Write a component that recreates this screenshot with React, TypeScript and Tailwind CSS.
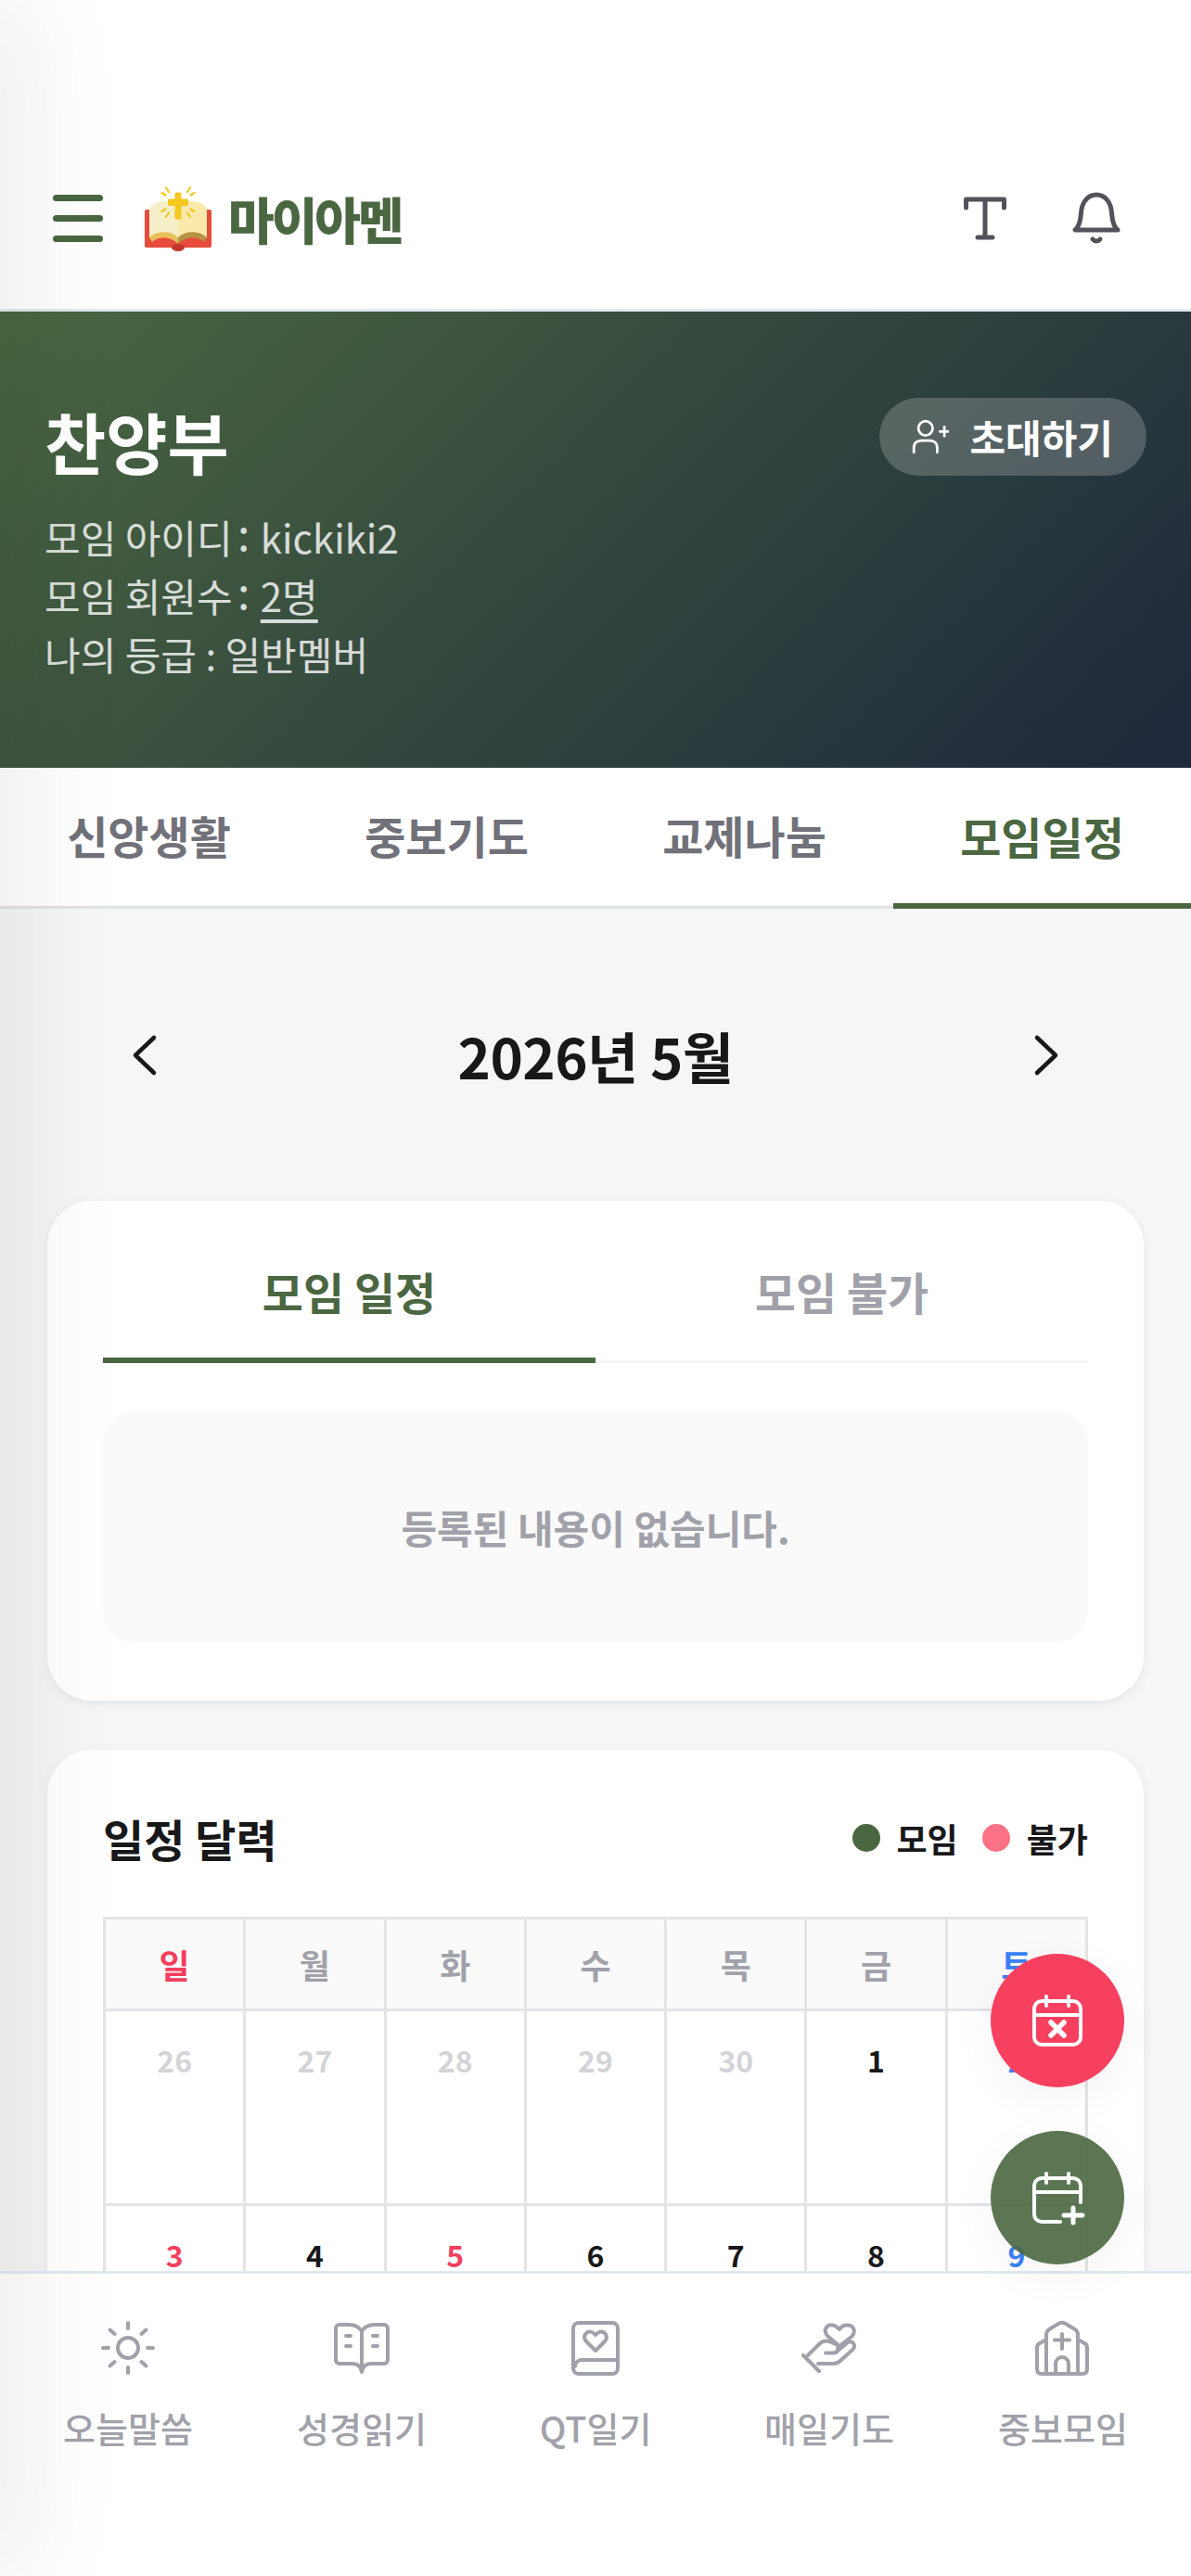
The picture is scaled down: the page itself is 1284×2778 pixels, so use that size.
import type { ReactNode } from "react";

const FONT = { fontFamily: '"Noto Sans CJK KR", "Noto Sans", sans-serif' };

function Icon({ children, className = "" }: { children: ReactNode; className?: string }) {
  return (
    <svg
      viewBox="0 0 60 60"
      fill="none"
      stroke="currentColor"
      strokeWidth={4}
      strokeLinecap="round"
      strokeLinejoin="round"
      className={className}
      aria-hidden="true"
    >
      {children}
    </svg>
  );
}

function Logo() {
  return (
    <svg viewBox="0 0 72 70" className="h-[70px] w-[72px]" aria-hidden="true">
      <rect x="0" y="25" width="72" height="41" rx="2" fill="#e74c3c" />
      <ellipse cx="36" cy="66" rx="7" ry="4" fill="#c0392b" />
      <path d="M36 18C28 15 17 15 12 18 8 20 5 22 5 26V56C16 47 28 49 36 56Z" fill="#f5efc9" />
      <path d="M36 18C44 15 55 15 60 18 64 20 67 22 67 26V56C56 47 44 49 36 56Z" fill="#f9e9ab" />
      <path d="M5 55C15 47 28 48 36 55V62C28 54 16 53 8 60Z" fill="#e8bf5a" />
      <path d="M67 55C57 47 44 48 36 55V62C44 54 56 53 64 60Z" fill="#b59343" />
      <rect x="32.5" y="6.5" width="7" height="29" rx="1.5" fill="#f4c81e" />
      <rect x="25" y="13.5" width="22" height="7.5" rx="1.5" fill="#f4c81e" />
      <g stroke="#f4c81e" strokeWidth="2.2" strokeLinecap="round">
        <path d="M23 1.5l3 4.5M49 1.5l-3 4.5M18.500 7l4 2.500M53.500 7l-4 2.500" />
        <path d="M18.500 27l4-2.500M53.500 27l-4-2.500M23 33l3-4.500M49 33l-3-4.500" />
      </g>
    </svg>
  );
}

const days = [
  { label: "일", color: "text-[#f43f5e]" },
  { label: "월", color: "text-[#a1a1aa]" },
  { label: "화", color: "text-[#a1a1aa]" },
  { label: "수", color: "text-[#a1a1aa]" },
  { label: "목", color: "text-[#a1a1aa]" },
  { label: "금", color: "text-[#a1a1aa]" },
  { label: "토", color: "text-[#3b82f6]" },
];

const weeks = [
  [
    { n: 26, c: "text-[#d4d4d8]" },
    { n: 27, c: "text-[#d4d4d8]" },
    { n: 28, c: "text-[#d4d4d8]" },
    { n: 29, c: "text-[#d4d4d8]" },
    { n: 30, c: "text-[#d4d4d8]" },
    { n: 1, c: "text-[#18181b]" },
    { n: 2, c: "text-[#3b82f6]" },
  ],
  [
    { n: 3, c: "text-[#f43f5e]" },
    { n: 4, c: "text-[#18181b]" },
    { n: 5, c: "text-[#f43f5e]" },
    { n: 6, c: "text-[#18181b]" },
    { n: 7, c: "text-[#18181b]" },
    { n: 8, c: "text-[#18181b]" },
    { n: 9, c: "text-[#3b82f6]" },
  ],
];

const navItems: { label: string; icon: ReactNode }[] = [
  {
    label: "오늘말씀",
    icon: (
      <>
        <circle cx="30" cy="30" r="11" />
        <path d="M30 3v6M30 51v6M3 30h6M51 30h6M10.500 10.500l5 4.500M49.500 10.500l-5 4.500M10.500 49.500l5-4.500M49.500 49.500l-5-4.500" />
      </>
    ),
  },
  {
    label: "성경읽기",
    icon: (
      <>
        <path d="M30 12C27 7 22 5 16 5H6A4 4 0 0 0 2 9V43A4 4 0 0 0 6 47H20C25 47 29 50 30 56 31 50 35 47 40 47H54A4 4 0 0 0 58 43V9A4 4 0 0 0 54 5H44C38 5 33 7 30 12V50" />
        <path d="M13 17h5M13 28h5M42 17h5M42 28h5" />
      </>
    ),
  },
  {
    label: "QT일기",
    icon: (
      <>
        <rect x="6" y="3" width="48" height="55" rx="6" />
        <path d="M8 50A7 7 0 0 1 15 43H53" />
        <path d="M30 33L20 23C15 17 21 11 26 13 28 14 29 15 30 16 31 15 32 14 34 13 39 11 45 17 40 23Z" />
      </>
    ),
  },
  {
    label: "매일기도",
    icon: (
      <>
        <path d="M41 28L28 17C23 11 27 4 34 5.500 37 6 39 8 41 10 43 7 46 5 50 5.500 57 6 59 13 54 18Z" />
        <path d="M7 38L19 26C22 23 26 22 30 23L37 26C41 28 40 35 35 35.500H26" />
        <path d="M37 35L50 24C55 21 60 28 55 32L43 43C40 46 38 47 35 47H18" />
        <path d="M2 38L19 55" />
      </>
    ),
  },
  {
    label: "중보모임",
    icon: (
      <>
        <path d="M12 21L5 25Q2 26 2 30V53Q2 58 7 58H51Q56 58 56 53V30Q56 26 53 25L46 21" />
        <path d="M12 58V16Q12 12 15 10L26 3.500Q29 2 32 3.500L43 10Q46 12 46 16V58" />
        <path d="M29 15V31M21 21.500H37" />
        <path d="M22 58V47A7 7 0 0 1 36 47V58" />
      </>
    ),
  },
];

export default function App() {
  return (
    <div style={FONT} className="relative flex h-[2778px] w-[1284px] flex-col overflow-hidden bg-white">
      <header className="flex h-[336px] shrink-0 items-center border-b-[3px] border-[#e2e8f0] pl-[57px] pr-[72px] pt-[138px]">
        <div className="flex w-[54px] flex-col gap-[15px]">
          <span className="h-[7px] rounded-full bg-[#4a6741]" />
          <span className="h-[7px] rounded-full bg-[#4a6741]" />
          <span className="h-[7px] rounded-full bg-[#4a6741]" />
        </div>
        <div className="ml-[45px] flex items-center">
          <Logo />
        </div>
        <span className="ml-[18px] text-[54px] leading-[70px] font-black tracking-[-3px] text-[#4a6741]">마이아멘</span>
        <div className="ml-auto flex items-center gap-[60px] text-[#52525b]">
          <Icon className="h-[60px] w-[60px]">
            <path d="M9.500 18V9H50.500V18M30 9V50M22 50H38" strokeWidth="5" />
          </Icon>
          <Icon className="h-[60px] w-[60px]">
            <path d="M7 42H53C48 38 47 31 46.500 24 46 12 39 4 30 4 21 4 14 12 13.500 24 13 31 12 38 7 42Z" strokeWidth="5" />
            <path d="M26 52C28 54.500 32 54.500 34 52" strokeWidth="5" />
          </Icon>
        </div>
      </header>

      <section className="flex h-[492px] shrink-0 items-start justify-between bg-[linear-gradient(135deg,#4a6741,#1e293b_97%)] px-[48px] pt-[93px]">
        <div>
          <h1 className="text-[72px] leading-[92px] font-bold text-white">찬양부</h1>
          <div className="mt-[26px] text-[42px] leading-[63px] font-normal text-white/80">
            <p>
              모임 아이디 <span className="relative -top-[3px] -ml-[4px] mr-[2px] text-[48px] leading-none">:</span> kickiki2
            </p>
            <p>
              모임 회원수 <span className="relative -top-[3px] -ml-[4px] mr-[2px] text-[48px] leading-none">:</span>{" "}
              <span className="underline underline-offset-[8px]">2명</span>
            </p>
            <p>나의 등급 : 일반멤버</p>
          </div>
        </div>
        <button className="flex h-[84px] items-center gap-[22px] rounded-full bg-white/20 pl-[33px] pr-[36px] text-[42px] leading-none font-bold text-white">
          <Icon className="h-[42px] w-[42px]">
            <circle cx="24" cy="17" r="11" />
            <path d="M6 54V47C6 39 12 36 18 36H30C36 36 42 39 42 47V54M46 22H60M53 15V29" />
          </Icon>
          초대하기
        </button>
      </section>

      <nav className="grid h-[152px] shrink-0 grid-cols-4 border-b-[3px] border-[#e4e4e7] pb-[6px] text-[48px] font-bold text-[#71717a]">
        <div className="flex items-center justify-center">신앙생활</div>
        <div className="flex items-center justify-center">중보기도</div>
        <div className="flex items-center justify-center">교제나눔</div>
        <div className="-mb-[9px] flex items-center justify-center border-b-[6px] border-[#4a6741] text-[#4a6741]">모임일정</div>
      </nav>

      <main className="min-h-0 flex-1 overflow-hidden bg-[#f5f6f8] px-[51px]">
        <div className="flex h-[315px] items-center justify-between px-[78px] text-[#18181b]">
          <Icon className="h-[60px] w-[60px]">
            <path d="M37 11L17 30L37 49" strokeWidth="4.500" />
          </Icon>
          <h2 className="text-[60px] leading-none font-bold tracking-[-0.5px]">2026년 5월</h2>
          <Icon className="h-[60px] w-[60px]">
            <path d="M23 11L43 30L23 49" strokeWidth="4.500" />
          </Icon>
        </div>

        <section className="h-[539px] rounded-[48px] bg-white px-[60px] shadow-[0_3px_12px_rgba(0,0,0,0.07)]">
          <div className="flex h-[175px] border-b-[3px] border-[#f4f4f5] pt-[62px] text-[48px] font-bold text-[#a1a1aa]">
            <div className="-mb-[3px] flex h-[113px] flex-1 justify-center border-b-[6px] border-[#4a6741] leading-[70px] text-[#4a6741]">모임 일정</div>
            <div className="flex flex-1 justify-center leading-[70px]">모임 불가</div>
          </div>
          <div className="mt-[51px] flex h-[251px] items-center justify-center rounded-[36px] bg-[#fafafa] text-[42px] font-bold text-[#a1a1aa]">
            등록된 내용이 없습니다.
          </div>
        </section>

        <section className="mt-[53px] rounded-[48px] bg-white px-[60px] pb-[60px] pt-[58px] shadow-[0_3px_12px_rgba(0,0,0,0.07)]">
          <div className="flex h-[74px] items-center justify-between">
            <h3 className="text-[48px] leading-none font-bold text-[#18181b]">일정 달력</h3>
            <div className="flex items-center text-[36px] font-bold text-[#18181b]">
              <span className="h-[30px] w-[30px] rounded-full bg-[#4a6741]" />
              <span className="ml-[18px]">모임</span>
              <span className="ml-[26px] h-[30px] w-[30px] rounded-full bg-[#fb7185]" />
              <span className="ml-[18px]">불가</span>
            </div>
          </div>
          <div className="mt-[48px] grid grid-cols-7 border-l-[3px] border-t-[3px] border-[#e4e4e7]">
            {days.map((d) => (
              <div
                key={d.label}
                className={`flex h-[99px] items-center justify-center border-b-[3px] border-r-[3px] border-[#e4e4e7] bg-[#fafafa] text-[36px] font-bold ${d.color}`}
              >
                {d.label}
              </div>
            ))}
            {weeks.flat().map((d) => (
              <div
                key={d.n}
                className={`flex h-[210px] justify-center border-b-[3px] border-r-[3px] border-[#e4e4e7] pt-[29px] text-[32px] leading-[46px] font-bold ${d.c}`}
              >
                {d.n}
              </div>
            ))}
          </div>
        </section>
      </main>

      <footer className="relative grid h-[329px] shrink-0 grid-cols-5 border-t-[3px] border-[#e2e8f0] bg-white px-[12px] pt-[50px] text-[#a1a1aa]">
        {navItems.map((item) => (
          <div key={item.label} className="flex flex-col items-center">
            <Icon className="h-[60px] w-[60px]">{item.icon}</Icon>
            <span className="mt-[31px] text-[38px] leading-[50px] font-medium">{item.label}</span>
          </div>
        ))}
      </footer>

      {/* drawer sitting just off the left edge, only its shadow shows */}
      <div className="pointer-events-none absolute bottom-0 left-[-40px] top-0 z-10 w-[40px] shadow-[0_0_120px_rgba(0,0,0,0.2)]" />

      <button className="absolute right-[72px] top-[2107px] z-30 flex h-[144px] w-[144px] items-center justify-center rounded-full bg-[#f7405f] text-white shadow-[0_12px_48px_rgba(0,0,0,0.05)]">
        <Icon className="h-[60px] w-[60px]">
          <rect x="5" y="9" width="50" height="47" rx="8" />
          <path d="M18 4V14M42 4V14M5 24H55" />
          <path d="M23 32L37 46M37 32L23 46" strokeWidth="5.500" />
        </Icon>
      </button>
      <button className="absolute right-[72px] top-[2298px] z-30 flex h-[144px] w-[144px] items-center justify-center rounded-full bg-[#4a6741]/90 text-white shadow-[0_12px_48px_rgba(0,0,0,0.05)]">
        <Icon className="h-[60px] w-[60px]">
          <path d="M55 35V17A8 8 0 0 0 47 9H13A8 8 0 0 0 5 17V48A8 8 0 0 0 13 56H33" />
          <path d="M18 4V14M42 4V14M5 24H55" />
          <path d="M37 49H57M47 41V57" strokeWidth="5" />
        </Icon>
      </button>
    </div>
  );
}
